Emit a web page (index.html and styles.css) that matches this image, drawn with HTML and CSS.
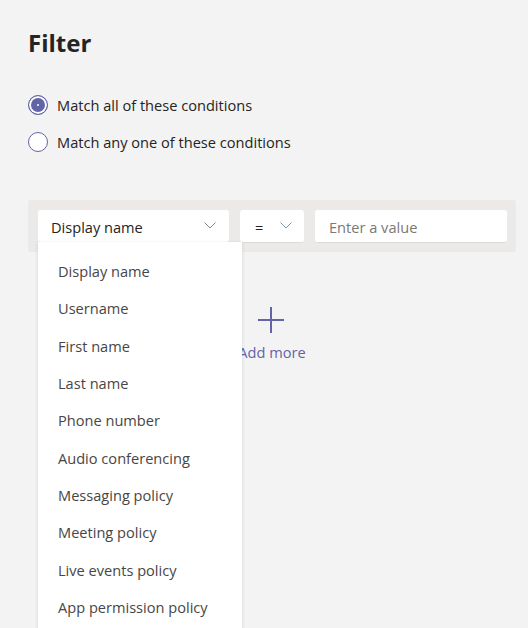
FILE: index.html
```html
<!DOCTYPE html>
<html>
<head>
<meta charset="utf-8">
<link rel="stylesheet" href="styles.css">
</head>
<body>
<div class="page">
  <h1 class="title">Filter</h1>
  <div class="radios">
    <label class="radio-row"><span class="radio checked"><span class="dot"></span></span><span class="radio-label">Match all of these conditions</span></label>
    <label class="radio-row"><span class="radio"></span><span class="radio-label">Match any one of these conditions</span></label>
  </div>
  <div class="bar">
    <div class="select field-wide">
      <span class="select-text">Display name</span>
      <svg class="chev" width="12" height="7" viewBox="0 0 12 7"><path d="M0.5 0.5 L6 6 L11.5 0.5" fill="none" stroke="#8a8886" stroke-width="1"/></svg>
      <ul class="menu">
        <li>Display name</li>
        <li>Username</li>
        <li>First name</li>
        <li>Last name</li>
        <li>Phone number</li>
        <li>Audio conferencing</li>
        <li>Messaging policy</li>
        <li>Meeting policy</li>
        <li>Live events policy</li>
        <li>App permission policy</li>
      </ul>
    </div>
    <div class="select field-op">
      <span class="select-text">=</span>
      <svg class="chev" width="12" height="7" viewBox="0 0 12 7"><path d="M0.5 0.5 L6 6 L11.5 0.5" fill="none" stroke="#7f9bb8" stroke-width="1"/></svg>
    </div>
    <div class="input field-value"><span class="placeholder">Enter a value</span></div>
  </div>
  <div class="add-more">
    <svg class="plus" width="26" height="26" viewBox="0 0 26 26"><path d="M13 0 V26 M0 13 H26" stroke="#6264a7" stroke-width="2" fill="none"/></svg>
    <span class="add-label">Add more</span>
  </div>
</div>
</body>
</html>
```
FILE: styles.css
```css
html, body {
  margin: 0;
  padding: 0;
  background: #f3f3f3;
  height: 100%;
  overflow: hidden;
}
body {
  font-family: "Segoe UI", "Open Sans", "Noto Sans", sans-serif;
  color: #252423;
}
.page {
  padding: 27px 12px 0 28px;
}
.title {
  margin: 0;
  font-size: 24px;
  line-height: 32px;
  font-weight: 700;
  color: #252423;
}
.radios {
  margin-top: 36px;
  display: flex;
  flex-direction: column;
  gap: 17px;
}
.radio-row {
  display: flex;
  align-items: center;
  height: 20px;
  gap: 9px;
}
.radio {
  box-sizing: border-box;
  width: 20px;
  height: 20px;
  border-radius: 50%;
  border: 1px solid #6264a7;
  background: #fff;
  display: flex;
  align-items: center;
  justify-content: center;
}
.radio.checked {
  background: #6264a7;
  box-shadow: inset 0 0 0 2px #fff;
  border-color: #6264a7;
}
.radio .dot {
  width: 2px;
  height: 2px;
  border-radius: 50%;
  background: #fff;
}
.radio-label {
  font-size: 14.6px;
  line-height: 20px;
  color: #252423;
}
.bar {
  margin-top: 48px;
  width: 488px;
  box-sizing: border-box;
  height: 52px;
  padding: 10px 9px 9px 10px;
  background: #ebeae9;
  border-radius: 3px;
  display: flex;
  gap: 11px;
}
.select, .input {
  position: relative;
  box-sizing: border-box;
  height: 33px;
  background: #fff;
  border-radius: 3px;
  border-bottom: 1px solid #dcdad9;
  display: flex;
  align-items: center;
  font-size: 14.6px;
}
.field-wide {
  width: 191px;
  padding: 0 13px;
  justify-content: space-between;
}
.field-op {
  width: 64px;
  padding: 0 12px 0 15px;
  justify-content: space-between;
}
.field-value {
  width: 192px;
  padding: 0 14px;
}
.select-text, .placeholder {
  padding-top: 1px;
}
.select-text {
  color: #252423;
}
.placeholder {
  color: #7a7876;
}
.chev {
  margin-top: -2px;
}
.menu {
  position: absolute;
  left: 0;
  top: 100%;
  width: 204px;
  margin: 0;
  padding: 11px 0 20px 0;
  list-style: none;
  background: #fff;
  box-shadow: 0 1px 4px rgba(0,0,0,0.12);
  z-index: 5;
}
.menu li {
  height: 37.33px;
  line-height: 37.33px;
  padding-left: 20px;
  font-size: 14.6px;
  color: #484644;
  white-space: nowrap;
}
.add-more {
  margin-top: 55px;
  margin-left: 212px;
  width: 64px;
  display: flex;
  flex-direction: column;
  align-items: center;
}
.plus {
  display: block;
  margin-left: -2px;
}
.add-label {
  margin-top: 9px;
  font-size: 14.6px;
  line-height: 20px;
  color: #6264a7;
  white-space: nowrap;
}
```
